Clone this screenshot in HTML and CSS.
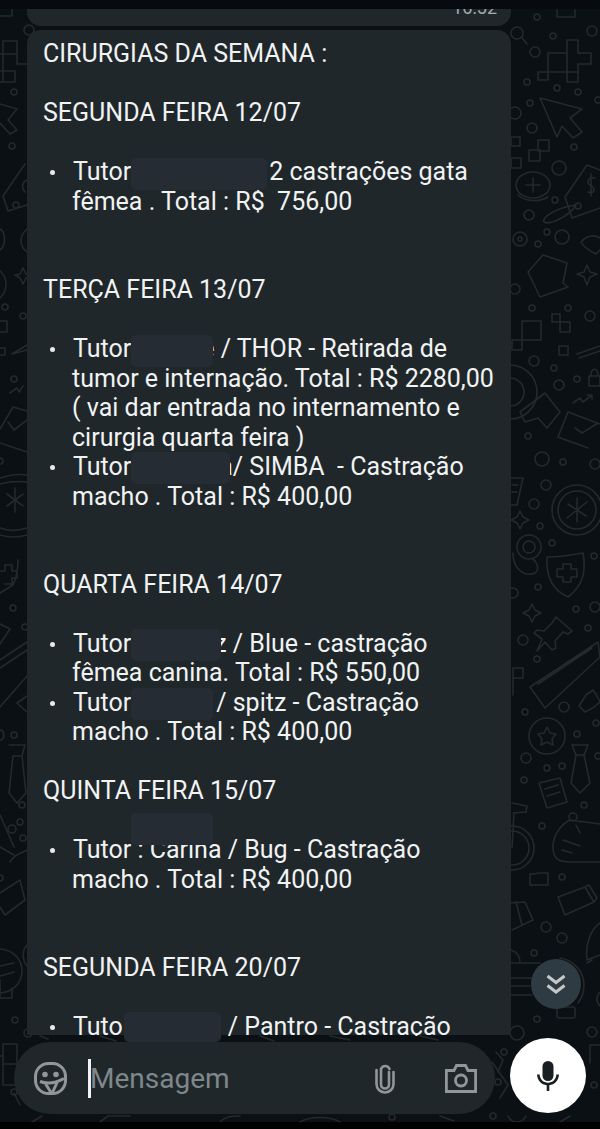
FILE: index.html
```html
<!doctype html>
<html>
  <head>
    <title>Conversa</title>
    <link rel="stylesheet" href="styles.css">
  </head>
  <body>
    <div class="phone">
      <svg class="doodles" viewBox="0 0 600 1129" fill="none" stroke="#24292d" stroke-width="1.6" stroke-linejoin="round" stroke-linecap="round">
        <!-- left edge -->
        <path d="M0 16H12V9M3 41H17V64H27M0 54H17M3 41V82M0 71H15V82H0"/>
        <circle cx="29" cy="30" r="5"/><circle cx="14" cy="92" r="3"/><circle cx="12" cy="146" r="3"/>
        <path d="M0 104L17 109 8 120 17 130 10 134 0 123"/>
        <path d="M25 164L3 196 8 211 27 205M27 180C22 182 21 188 25 192M0 229C6 232 6 246 0 250M27 229C20 235 18 245 27 252M0 271C8 278 8 290 0 298"/>
        <circle cx="16" cy="205" r="3"/><circle cx="5" cy="307" r="3"/><circle cx="23" cy="316" r="3"/>
        <path d="M23 268L26 274 31 275 26 278 23 284 20 278 15 275 20 274z"/>
        <path d="M0 321H7V332H0M0 348H5V355H0M12 354L27 345M12 354L27 350"/>
        <circle cx="14" cy="379" r="3"/>
        <path d="M10 393L17 388 19 392 23 386M13 407L27 411M13 407L0 429M8 422L14 430 27 420M0 443L27 452"/>
        <circle cx="0" cy="461" r="3"/>
        <path d="M0 478C10 475 20 474 27 475M0 484C8 482 18 481 27 482M0 535C10 538 20 537 27 535M0 528C8 531 18 531 27 528"/>
        <path d="M15 488V512M7 494L23 506M23 494L7 506"/>
        <path d="M0 571H5V565H12V571H17V578H12V584H5M0 593L13 585C17 577 18 568 18 560"/>
        <circle cx="13" cy="608" r="3"/><circle cx="25" cy="627" r="3"/>
        <path d="M0 624L10 629 0 644M0 660L27 642M0 668L27 650M0 707L27 676M27 696L17 703 27 712"/>
        <circle cx="14" cy="735" r="3"/><path d="M0 730C5 730 5 740 0 740"/>
        <path d="M9 745H25L22 756H13L9 793 17 803 26 793 22 756"/>
        <circle cx="22" cy="805" r="3"/><circle cx="12" cy="829" r="4"/><circle cx="20" cy="822" r="3"/><circle cx="23" cy="838" r="3"/>
        <path d="M0 815L14 847M0 847L14 855M10 862C14 854 22 853 27 850"/>
        <circle cx="0" cy="878" r="3"/>
        <path d="M20 880L25 900 5 915 0 907M0 893L20 880"/>
        <path d="M27 945C22 950 22 960 27 966"/>
        <path d="M0 949C14 950 22 960 22 971 22 982 14 992 0 993M0 966L14 963M0 976L14 972"/>
        <path d="M0 980V998H12V988"/>
        <circle cx="28" cy="1033" r="4"/><circle cx="15" cy="1020" r="3"/>
        <path d="M3 1044H17V1085H3zM3 1064H17M0 1056H3M14 1093L20 1105"/>
        <circle cx="14" cy="1092" r="3"/>
        <!-- right edge, top -->
        <circle cx="517" cy="33" r="6"/><path d="M522 38L527 44"/>
        <circle cx="537" cy="17" r="3"/><circle cx="553" cy="36" r="3"/><circle cx="592" cy="31" r="5"/><circle cx="535" cy="52" r="5"/><circle cx="527" cy="82" r="3"/>
        <path d="M557 10V17H575V10"/>
        <path d="M548 53H567V40H578V53H591V64H578V82H567V72H548V80H538V72H548zM567 53V72H578"/>
        <circle cx="557" cy="88" r="3"/><circle cx="578" cy="92" r="3"/><circle cx="530" cy="103" r="3"/><circle cx="598" cy="100" r="3"/>
        <path d="M540 98L582 109 570 118 582 132 573 138 562 126 557 137z"/>
        <circle cx="532" cy="128" r="5"/><circle cx="515" cy="113" r="6"/>
        <rect x="538" y="140" width="11" height="11"/><rect x="529" y="150" width="11" height="11"/><rect x="511" y="137" width="9" height="9"/><rect x="511" y="158" width="10" height="10"/>
        <circle cx="574" cy="147" r="3"/><circle cx="559" cy="168" r="7"/>
        <ellipse cx="533" cy="185" rx="17" ry="13"/><path d="M533 178V192M526 185H540M518 195C525 202 540 202 548 197"/>
        <path d="M587 165L565 197 572 218 600 208M587 165L600 170"/>
        <path d="M595 178C588 176 586 183 590 185 596 188 595 195 588 192M591 174V196"/>
        <circle cx="578" cy="206" r="3"/>
        <path d="M576 205C555 208 541 218 544 222 548 225 568 218 576 205z"/>
        <circle cx="555" cy="200" r="3"/><circle cx="529" cy="215" r="5"/><circle cx="520" cy="239" r="7"/><circle cx="520" cy="239" r="2"/><circle cx="547" cy="232" r="3"/><circle cx="538" cy="244" r="3"/><circle cx="562" cy="237" r="7"/>
        <path d="M600 238C594 234 586 236 581 242 584 248 592 252 596 254L600 250"/>
        <path d="M543 255L567 263 563 283 568 287 540 297 528 272z"/>
        <path d="M587 265L590 272 597 274 590 277 587 285 584 277 577 274 584 272z"/>
        <circle cx="515" cy="289" r="5"/><circle cx="532" cy="308" r="3"/><circle cx="568" cy="308" r="3"/><circle cx="590" cy="316" r="5"/>
        <rect x="552" y="314" width="8" height="8"/><rect x="560" y="322" width="10" height="10"/><rect x="559" y="346" width="9" height="9"/>
        <rect x="522" y="321" width="19" height="19"/><rect x="512" y="340" width="10" height="10"/>
        <path d="M577 354L600 346M579 358L600 351"/>
        <circle cx="534" cy="361" r="5"/><circle cx="554" cy="368" r="3"/><circle cx="559" cy="385" r="5"/><circle cx="577" cy="379" r="3"/>
        <rect x="589" y="376" width="11" height="10"/><path d="M591 376C591 367 598 367 598 376"/>
        <circle cx="510" cy="392" r="27"/><circle cx="510" cy="392" r="14"/>
        <path d="M520 412L545 393 560 412 547 428 538 418 525 422z"/>
        <path d="M573 403L580 398 583 402 592 395M587 395H592V399"/>
        <path d="M568 412L600 424M568 412L558 437 588 448M575 428L582 433 598 423"/>
        <circle cx="528" cy="436" r="3"/>
        <!-- right edge, middle -->
        <circle cx="542" cy="459" r="7"/><circle cx="563" cy="462" r="3"/><circle cx="595" cy="464" r="5"/><circle cx="546" cy="485" r="5"/><circle cx="534" cy="504" r="5"/><circle cx="540" cy="526" r="3"/>
        <path d="M510 478H523L517 505H510M512 485H518M512 492H517"/>
        <circle cx="577" cy="510" r="25"/><circle cx="577" cy="510" r="19"/>
        <path d="M577 498V522M568 504L586 516M587 502L567 518"/>
        <path d="M520 511L523 517 529 520 523 523 520 529 517 523 511 520 517 517z"/>
        <circle cx="529" cy="547" r="12"/><circle cx="529" cy="547" r="6"/>
        <path d="M513 553C513 570 525 577 535 573 540 570 537 562 533 559"/>
        <circle cx="552" cy="543" r="3"/><circle cx="594" cy="556" r="3"/><circle cx="538" cy="587" r="3"/>
        <path d="M547 557C560 557 572 555 583 553 586 570 584 585 568 597 552 590 546 575 547 557z"/>
        <path d="M563 564H571V569H577V577H571V582H563V577H557V569H563z"/>
        <path d="M532 604L535 610 541 613 535 616 532 622 529 616 523 613 529 610z"/>
        <circle cx="513" cy="593" r="5"/><circle cx="576" cy="609" r="3"/><circle cx="595" cy="607" r="5"/><circle cx="588" cy="628" r="3"/><circle cx="523" cy="640" r="5"/>
        <path d="M556 617L572 631 568 634 563 632 555 641 556 648 552 650 545 642 537 651 542 639 534 633 537 630 544 631 552 623z"/>
        <path d="M530 687L598 642 600 657 545 708zM538 684L592 648" />
        <circle cx="537" cy="659" r="3"/>
        <path d="M513 668H523V678H513M513 668V695"/>
        <circle cx="564" cy="707" r="5"/><circle cx="525" cy="712" r="3"/><circle cx="596" cy="723" r="3"/>
        <path d="M586 695L593 690 597 696 600 702 593 708 585 712 579 706z"/>
        <circle cx="547" cy="736" r="18"/><path d="M547 727L550 733 556 734 552 739 553 745 547 742 541 745 542 739 538 734 544 733z"/>
        <circle cx="577" cy="734" r="3"/><circle cx="526" cy="758" r="5"/><circle cx="547" cy="768" r="3"/><circle cx="562" cy="766" r="3"/><circle cx="524" cy="780" r="3"/><circle cx="598" cy="756" r="3"/>
        <path d="M572 745H588L584 755H576zM576 755L571 783 580 793 590 783 584 755"/>
        <path d="M539 783L560 778 567 802 547 808zM545 789L558 785M547 796L560 792"/>
        <circle cx="584" cy="805" r="3"/><circle cx="542" cy="826" r="3"/>
        <circle cx="512" cy="848" r="22"/><circle cx="512" cy="848" r="17"/>
        <path d="M512 803L527 806 526 812 513 813M514 813L512 848"/>
        <path d="M553 847C553 834 562 824 570 820L600 824M553 847C553 860 560 862 570 862H600M563 840L580 846M562 850L572 853"/>
        <circle cx="573" cy="817" r="4"/><path d="M576 825L580 833"/>
        <path d="M530 874H535L538 873H548V885H530z"/>
        <circle cx="562" cy="877" r="3"/>
        <path d="M558 897L585 887 594 902 565 915zM585 887L589 885 597 898 594 902"/>
        <path d="M510 903L525 902 533 920 512 930M516 902L522 925"/>
        <circle cx="546" cy="927" r="5"/><circle cx="562" cy="938" r="5"/><circle cx="534" cy="953" r="3"/>
        <path d="M600 923C590 930 585 945 587 960L600 955M592 960L587 963"/>
        <path d="M511 950C518 952 520 958 520 963M511 963H540M511 978H532M511 986H530M511 995H532"/>
        <path d="M560 958C574 960 584 972 584 985 584 992 582 998 578 1003"/>
        <circle cx="537" cy="1019" r="3"/><rect x="557" y="1007" width="18" height="11" rx="2"/>
        <circle cx="517" cy="1033" r="7"/><circle cx="592" cy="1032" r="5"/><path d="M600 992C596 996 596 1002 600 1006"/>
        <!-- under the composer and around the mic -->
        <path d="M40 1036L48 1039M100 1036L116 1041M190 1036L205 1040M260 1036L274 1041M330 1036L350 1040M420 1036L438 1040"/>
        <path d="M496 1052L503 1060 498 1072M492 1062L508 1085 500 1098M590 1045H600M590 1045V1063"/>
        <circle cx="498" cy="1082" r="3"/><circle cx="504" cy="1052" r="3"/><circle cx="594" cy="1085" r="3"/>
        <path d="M32 1122L42 1116M100 1122L108 1116H130M220 1122C226 1116 232 1116 240 1116M300 1122C310 1116 330 1116 340 1122M440 1116L454 1121"/>
        <circle cx="392" cy="1117" r="3"/><circle cx="493" cy="1116" r="3"/>
        <path d="M508 1116C512 1124 522 1124 526 1116M560 1122L570 1116"/>
      </svg>
      <div class="top-bar"></div>
      <div class="chat">
        <div class="bubble-prev"><span class="time">16:52</span></div>
        <div class="bubble">
          <p class="line">CIRURGIAS DA SEMANA :</p>
          <p class="line gap-1">SEGUNDA FEIRA 12/07</p>
          <ul class="list gap-1">
            <li>Tutor<span class="mask mask-a"></span>2 castrações gata<span class="back">fêmea . Total : R$&nbsp; 756,00</span></li>
          </ul>
          <p class="line gap-2">TERÇA FEIRA 13/07</p>
          <ul class="list gap-1">
            <li>Tutor<span class="mask mask-b"></span>e / THOR - Retirada de<span class="back">tumor e internação. Total : R$ 2280,00<br>( vai dar entrada no internamento e<br>cirurgia quarta feira )</span></li>
            <li>Tutor<span class="mask mask-c"></span>a/ SIMBA&nbsp; - Castração<span class="back">macho . Total : R$ 400,00</span></li>
          </ul>
          <p class="line gap-2">QUARTA FEIRA 14/07</p>
          <ul class="list gap-1">
            <li>Tutor<span class="mask mask-d"></span>z / Blue - castração<span class="back">fêmea canina. Total : R$ 550,00</span></li>
            <li>Tutor<span class="mask mask-e"></span>/ spitz - Castração<span class="back">macho . Total : R$ 400,00</span></li>
          </ul>
          <p class="line gap-1">QUINTA FEIRA 15/07</p>
          <ul class="list gap-1">
            <li>Tutor : Carina / Bug - Castração<span class="mask-over"></span><span class="back">macho . Total : R$ 400,00</span></li>
          </ul>
          <p class="line gap-2">SEGUNDA FEIRA 20/07</p>
          <ul class="list gap-1">
            <li class="cut">Tuto<span class="mask-spacer"></span>/ Pantro - Castração</li>
          </ul>
          <span class="mask-last"></span>
        </div>
        <button class="scroll-down">
          <svg viewBox="0 0 20 20" width="20" height="20" fill="none" stroke="#c3c8ca" stroke-width="3"><path d="M1.500 2l8.500 6.500 8.500-6.500"/><path d="M1.500 11.500l8.500 6.500 8.500-6.500"/></svg>
        </button>
      </div>
      <div class="composer">
        <div class="input">
          <svg class="icon-sticker" viewBox="0 0 33 33" width="33" height="33" fill="none" stroke="#90969a" stroke-width="3" stroke-linejoin="round">
            <rect x="1.500" y="1.500" width="30" height="30" rx="13"/>
            <circle cx="11" cy="12.500" r="2.800" fill="#90969a" stroke="none"/>
            <circle cx="22" cy="12.500" r="2.800" fill="#90969a" stroke="none"/>
            <path d="M6 19.500C13 22 21 21.500 30 16.500M11 21L17 30.500M23.500 19.500L18.500 30.500"/>
          </svg>
          <span class="caret"></span>
          <span class="placeholder">Mensagem</span>
          <svg class="icon-clip" viewBox="0 0 20 31" width="20" height="31" fill="none" stroke="#90969a" stroke-width="2.600" stroke-linecap="round">
            <path d="M14 9V21.500a4 4 0 0 1-8 0V6a4.500 4.500 0 0 1 8.500 0"/>
            <path d="M18.500 9V21a8.500 8.500 0 0 1-17 0V7"/>
          </svg>
          <svg class="icon-camera" viewBox="0 0 32 29" width="32" height="29" fill="none" stroke="#90969a" stroke-width="2.800">
            <path d="M1.400 6.500h7.600l2.500-5h9l2.500 5h7.600v21H1.400z"/>
            <circle cx="16" cy="16.500" r="5.500"/>
          </svg>
        </div>
        <button class="mic">
          <svg viewBox="0 0 22 30" width="22" height="30" fill="#1a1f22">
            <rect x="5.500" y="0" width="11" height="20" rx="5.500"/>
            <path d="M0 13.500h2.600c.5 5 3.800 8.200 8.400 8.200s7.900-3.200 8.400-8.200H22c-.5 6.200-4.400 10.100-9.700 10.700V30h-2.600v-5.800C4.400 23.600 .5 19.700 0 13.500z"/>
          </svg>
        </button>
      </div>
      <div class="bottom-bar"></div>
    </div>
  </body>
</html>
```
FILE: styles.css
```css
* {
  box-sizing: border-box;
}
html,
body {
  margin: 0;
  padding: 0;
}
body {
  width: 600px;
  height: 1129px;
  overflow: hidden;
  background: #0b1014;
  font-family: Roboto, "Liberation Sans", sans-serif;
}
button {
  border: none;
  padding: 0;
  display: flex;
  align-items: center;
  justify-content: center;
}

.phone {
  --lh: 29.48px;
  position: relative;
  width: 600px;
  height: 1129px;
  overflow: hidden;
}
.doodles {
  position: absolute;
  left: 0;
  top: 0;
  width: 600px;
  height: 1129px;
}
.top-bar {
  position: absolute;
  left: 0;
  top: 0;
  width: 600px;
  height: 9px;
  background: #070a0e;
}
.bottom-bar {
  position: absolute;
  left: 0;
  bottom: 0;
  width: 600px;
  height: 7px;
  background: #000;
}

.chat {
  position: relative;
  height: 1035px;
  padding: 9px 0 0 27px;
}
.bubble-prev {
  position: relative;
  width: 484px;
  height: 17px;
  overflow: hidden;
  background: #20272b;
  border-radius: 0 0 14px 14px;
}
.time {
  position: absolute;
  right: 14px;
  top: -11px;
  font-size: 18px;
  line-height: 20px;
  color: #a3aaae;
}
.bubble {
  position: relative;
  width: 484px;
  height: 1005px;
  margin-top: 4px;
  padding: 9.4px 16px 0;
  background: #20272b;
  border-radius: 14px 14px 0 0;
  color: #f1f3f3;
  font-size: 25px;
  line-height: var(--lh);
}
.line {
  margin: 0;
  height: var(--lh);
}
.gap-1 {
  margin-top: var(--lh);
}
.gap-2 {
  margin-top: calc(var(--lh) * 2);
}
.list {
  margin-bottom: 0;
  padding: 0;
  list-style: none;
}
.list li {
  position: relative;
  padding-left: 30px;
  white-space: nowrap;
}
.list li::before {
  content: "";
  position: absolute;
  left: 7px;
  top: 13px;
  width: 5px;
  height: 5px;
  border-radius: 50%;
  background: #e8eaea;
}
.back {
  display: block;
  margin-left: -1px;
}
.cut {
  height: 24px;
  overflow: hidden;
}

/* blurred-out names */
.mask,
.mask-spacer {
  display: inline-block;
  position: relative;
  height: 32px;
  margin: -4px 0;
  vertical-align: middle;
  background: #262c33;
  border-radius: 5px;
}
.mask-a {
  width: 136px;
  margin-right: 2px;
}
.mask-b {
  width: 82px;
  margin-right: -12px;
}
.mask-c {
  width: 99px;
  margin-right: -11px;
}
.mask-d {
  width: 90px;
  margin-right: -7px;
}
.mask-e {
  width: 82px;
  margin-right: 3px;
}
.mask-spacer {
  width: 105px;
  background: transparent;
}
.mask-over {
  position: absolute;
  left: 88px;
  top: -22px;
  width: 82px;
  height: 32px;
  background: #262c33;
  border-radius: 5px;
}
.mask-last {
  position: absolute;
  left: 97px;
  bottom: -7px;
  width: 97px;
  height: 30px;
  background: #262c33;
  border-radius: 5px;
}

.scroll-down {
  position: absolute;
  left: 531px;
  top: 959px;
  width: 50px;
  height: 50px;
  border-radius: 50%;
  background: #2f3b42;
}

.composer {
  position: relative;
  display: flex;
  align-items: flex-start;
  gap: 15px;
  padding: 3px 0 0 14px;
}
.input {
  display: flex;
  align-items: center;
  width: 481px;
  height: 72px;
  margin-top: 4px;
  padding: 0 18px 0 20px;
  background: #20272b;
  border-radius: 36px;
}
.caret {
  width: 3px;
  height: 39px;
  margin-left: 21px;
  background: #f2f2f2;
}
.placeholder {
  flex: 1;
  margin-left: -1px;
  color: #7f878b;
  font-size: 28px;
}
.icon-clip {
  margin-right: 50px;
}
.mic {
  width: 76px;
  height: 75px;
  border-radius: 50%;
  background: #fff;
}
```
